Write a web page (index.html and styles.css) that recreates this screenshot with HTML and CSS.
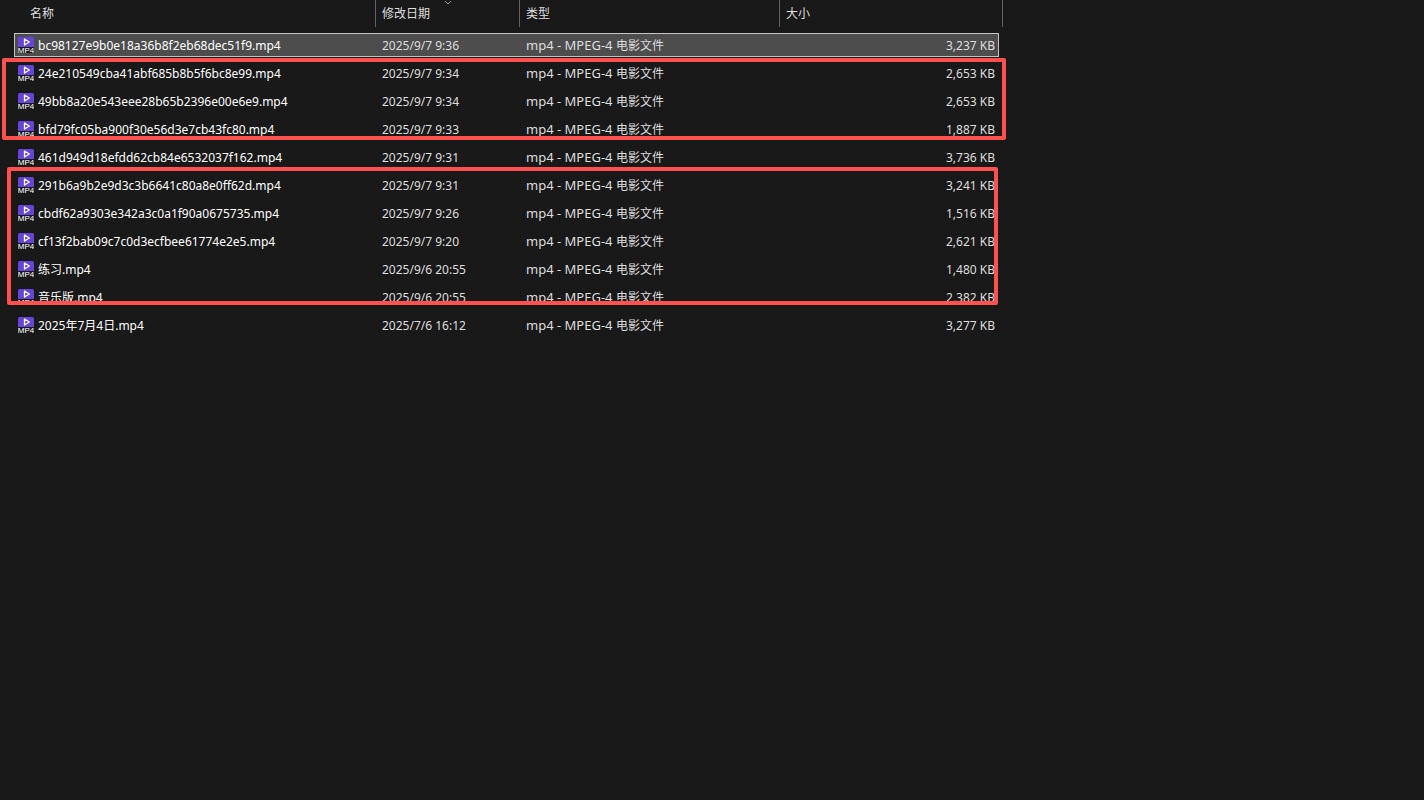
FILE: index.html
```html
<!DOCTYPE html>
<html lang="zh-CN">
<head>
<meta charset="utf-8">
<title>文件列表</title>
<link rel="stylesheet" href="styles.css">
</head>
<body>
<svg width="0" height="0" class="defs" aria-hidden="true">
  <symbol id="mp4" viewBox="0 0 16 16">
    <path d="M0 10V1.5Q0 0 1.5 0h13Q16 0 16 1.5V10z" fill="#6544d8"/>
    <path d="M0 10h16v5q0 1-1 1H1q-1 0-1-1z" fill="#1b1b1b"/>
    <path d="M6.5 2v6l4.8-3z" fill="none" stroke="#fff" stroke-width="1.3" stroke-linejoin="round"/>
    <text x="8" y="15.5" text-anchor="middle" class="icon-text">MP4</text>
  </symbol>
</svg>
<main class="listing">
  <table class="files">
    <colgroup><col><col class="col-date"><col class="col-type"><col class="col-size"></colgroup>
    <thead>
      <tr>
        <th scope="col"><button type="button" class="head head-name">名称</button></th>
        <th scope="col" aria-sort="descending"><button type="button" class="head">修改日期<svg class="sort" viewBox="0 0 8 5" aria-hidden="true"><path d="M1 1l3 3 3-3" fill="none" stroke="#9a9a9a"/></svg></button></th>
        <th scope="col"><button type="button" class="head">类型</button></th>
        <th scope="col"><button type="button" class="head">大小</button></th>
      </tr>
    </thead>
    <tbody>
      <tr class="selected"><td class="name"><svg class="icon"><use href="#mp4"/></svg>bc98127e9b0e18a36b8f2eb68dec51f9.mp4</td><td>2025/9/7 9:36</td><td class="type">mp4 - MPEG-4 <span class="kind">电影文件</span></td><td class="size">3,237 KB</td></tr>
      <tr><td class="name"><svg class="icon"><use href="#mp4"/></svg>24e210549cba41abf685b8b5f6bc8e99.mp4</td><td>2025/9/7 9:34</td><td class="type">mp4 - MPEG-4 <span class="kind">电影文件</span></td><td class="size">2,653 KB</td></tr>
      <tr><td class="name"><svg class="icon"><use href="#mp4"/></svg>49bb8a20e543eee28b65b2396e00e6e9.mp4</td><td>2025/9/7 9:34</td><td class="type">mp4 - MPEG-4 <span class="kind">电影文件</span></td><td class="size">2,653 KB</td></tr>
      <tr><td class="name"><svg class="icon"><use href="#mp4"/></svg>bfd79fc05ba900f30e56d3e7cb43fc80.mp4</td><td>2025/9/7 9:33</td><td class="type">mp4 - MPEG-4 <span class="kind">电影文件</span></td><td class="size">1,887 KB</td></tr>
      <tr><td class="name"><svg class="icon"><use href="#mp4"/></svg>461d949d18efdd62cb84e6532037f162.mp4</td><td>2025/9/7 9:31</td><td class="type">mp4 - MPEG-4 <span class="kind">电影文件</span></td><td class="size">3,736 KB</td></tr>
      <tr><td class="name"><svg class="icon"><use href="#mp4"/></svg>291b6a9b2e9d3c3b6641c80a8e0ff62d.mp4</td><td>2025/9/7 9:31</td><td class="type">mp4 - MPEG-4 <span class="kind">电影文件</span></td><td class="size">3,241 KB</td></tr>
      <tr><td class="name"><svg class="icon"><use href="#mp4"/></svg>cbdf62a9303e342a3c0a1f90a0675735.mp4</td><td>2025/9/7 9:26</td><td class="type">mp4 - MPEG-4 <span class="kind">电影文件</span></td><td class="size">1,516 KB</td></tr>
      <tr><td class="name"><svg class="icon"><use href="#mp4"/></svg>cf13f2bab09c7c0d3ecfbee61774e2e5.mp4</td><td>2025/9/7 9:20</td><td class="type">mp4 - MPEG-4 <span class="kind">电影文件</span></td><td class="size">2,621 KB</td></tr>
      <tr><td class="name"><svg class="icon"><use href="#mp4"/></svg>练习.mp4</td><td>2025/9/6 20:55</td><td class="type">mp4 - MPEG-4 <span class="kind">电影文件</span></td><td class="size">1,480 KB</td></tr>
      <tr><td class="name"><svg class="icon"><use href="#mp4"/></svg>音乐版.mp4</td><td>2025/9/6 20:55</td><td class="type">mp4 - MPEG-4 <span class="kind">电影文件</span></td><td class="size">2,382 KB</td></tr>
      <tr><td class="name"><svg class="icon"><use href="#mp4"/></svg>2025年7月4日.mp4</td><td>2025/7/6 16:12</td><td class="type">mp4 - MPEG-4 <span class="kind">电影文件</span></td><td class="size">3,277 KB</td></tr>
    </tbody>
  </table>
  <div class="mark mark-first"></div>
  <div class="mark mark-second"></div>
</main>
</body>
</html>
```

FILE: styles.css
```css
* { box-sizing: border-box; }
body {
  margin: 0;
  background: #191919;
  color: #dedede;
  font: 12px/20px "Noto Sans", "Noto Sans CJK SC", sans-serif;
}
.defs { position: absolute; }
.icon-text { font: 8px "Liberation Sans", sans-serif; fill: #fff; }
.listing { position: relative; max-width: 1003px; }
.files { width: 100%; table-layout: fixed; border-collapse: collapse; }
.col-date { width: 144px; }
.col-type { width: 260px; }
.col-size { width: 223px; }
th { height: 31px; padding: 0; vertical-align: top; font-weight: 400; }
.head {
  position: relative;
  display: block;
  width: 100%;
  height: 27px;
  padding: 0 6px;
  border: 0;
  border-right: 1px solid #636363;
  background: none;
  color: inherit;
  font: inherit;
  text-align: left;
}
.head-name { padding-left: 30px; }
.sort { position: absolute; top: 0; left: 50%; width: 8px; height: 5px; margin-left: -4px; }
tbody tr { position: relative; z-index: 0; }
td { height: 28px; padding: 2px 6px 0; white-space: nowrap; }
.name { padding-left: 18px; color: #fff; }
.icon { width: 16px; height: 16px; margin: 1px 4px 0 0; vertical-align: top; }
.type { padding-top: 0; font-size: 13px; }
.kind { font-size: 12px; }
.size { padding-right: 8px; text-align: right; }
.selected .name::before {
  content: "";
  position: absolute;
  inset: 2px 4px 2px 14px;
  z-index: -1;
  border: 1px solid #c4c4c4;
  background: #4d4d4d;
}
.mark { position: absolute; border: 4px solid #ff5050; border-radius: 2px; pointer-events: none; }
.mark-first { top: 58px; left: 2px; right: -3px; height: 82px; }
.mark-second { top: 167px; left: 7px; right: 5px; height: 138px; }
```
